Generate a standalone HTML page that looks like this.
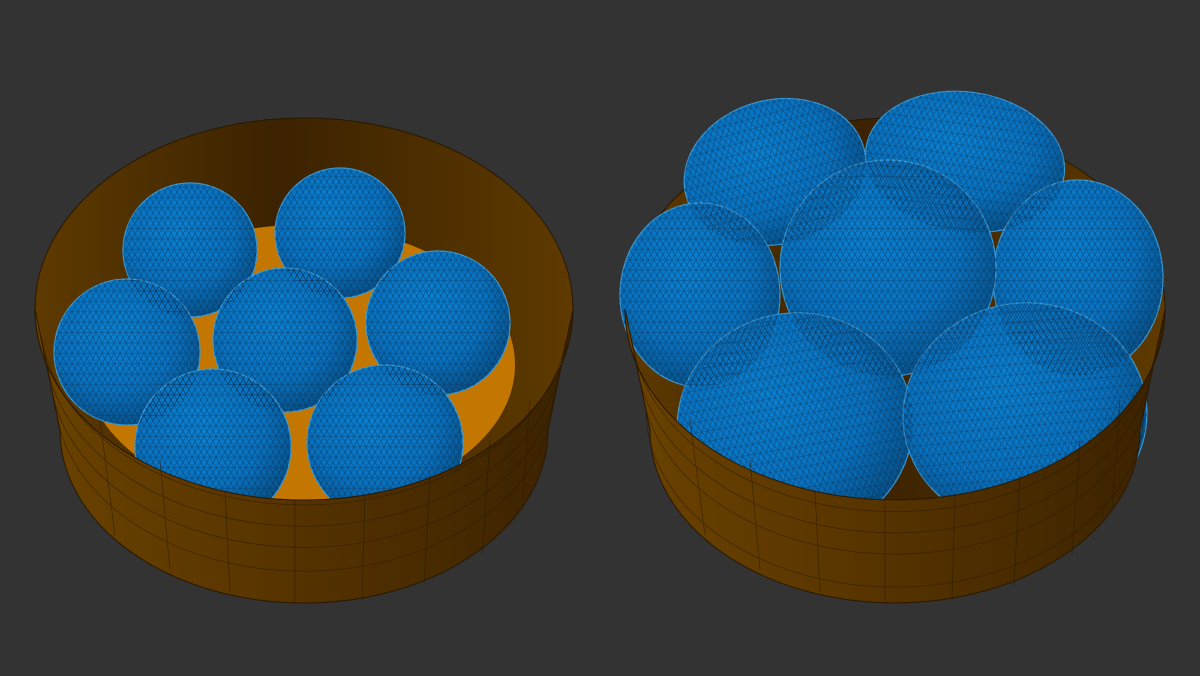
<!DOCTYPE html>
<html><head><meta charset="utf-8"><style>html,body{margin:0;padding:0;background:#333333;width:1200px;height:676px;overflow:hidden}</style></head>
<body>
<svg width="1200" height="676" viewBox="0 0 1200 676" xmlns="http://www.w3.org/2000/svg">
<defs>
<pattern id="mesh" width="12" height="20.78" patternUnits="userSpaceOnUse">
<path d="M0 0H12M0 10.39H12M0 20.78H12M0 0L12 20.78M12 0L0 20.78M6 0L12 10.39M6 0L0 10.39M12 10.39L6 20.78M0 10.39L6 20.78" stroke="#0b2540" stroke-width="0.6" fill="none" opacity="0.55"/>
</pattern>
<radialGradient id="sg" cx="0.42" cy="0.36" r="0.68">
<stop offset="0" stop-color="#0a80d0"/><stop offset="0.6" stop-color="#0872c0"/><stop offset="1" stop-color="#064e85"/>
</radialGradient>
<linearGradient id="wallIn" x1="0" y1="0" x2="1" y2="0">
<stop offset="0" stop-color="#5e3a00"/><stop offset="0.45" stop-color="#3b2200"/><stop offset="1" stop-color="#5e3a00"/>
</linearGradient>
<linearGradient id="wallOut" x1="0" y1="0" x2="1" y2="0">
<stop offset="0" stop-color="#6a4200"/><stop offset="0.4" stop-color="#5a3600"/><stop offset="0.7" stop-color="#4a2c00"/><stop offset="1" stop-color="#3a2200"/>
</linearGradient>
<clipPath id="c1"><ellipse cx="304" cy="309" rx="269" ry="191"/></clipPath>
</defs>

<!-- LEFT BOWL -->
<g>
<path d="M35 309 A269 191 0 0 0 573 309 L548 430 A244 173 0 0 1 60 430 Z" fill="url(#wallOut)"/>
<ellipse cx="304" cy="309" rx="269" ry="191" fill="url(#wallIn)" stroke="#2a1800" stroke-width="1"/>
<ellipse cx="300" cy="365" rx="215" ry="140" fill="#c47700" clip-path="url(#c1)"/>
<g fill="url(#sg)" stroke="#3a9bd8" stroke-width="1.2">
<circle cx="190" cy="250" r="67"/><circle cx="340" cy="233" r="65"/>
<circle cx="127" cy="352" r="73"/><circle cx="438" cy="323" r="72"/>
<circle cx="285" cy="340" r="72"/>
<circle cx="213" cy="447" r="78"/><circle cx="385" cy="443" r="78"/>
</g>
<g fill="url(#mesh)">
<circle cx="190" cy="250" r="67"/><circle cx="340" cy="233" r="65"/>
<circle cx="127" cy="352" r="73"/><circle cx="438" cy="323" r="72"/>
<circle cx="285" cy="340" r="72"/>
<circle cx="213" cy="447" r="78"/><circle cx="385" cy="443" r="78"/>
</g>
<path d="M35 309 A269 191 0 0 0 573 309 L548 430 A244 173 0 0 1 60 430 Z" fill="url(#wallOut)" stroke="#2a1800" stroke-width="1"/>
<g stroke="#2a1800" stroke-width="0.8" fill="none" opacity="0.6">
<path d="M42 340 A264 188 0 0 0 566 340"/><path d="M47 365 A259 184 0 0 0 561 365"/>
<path d="M52 390 A254 180 0 0 0 556 390"/><path d="M56 410 A249 177 0 0 0 552 410"/>
<path d="M100 420 L115 535M160 460 L170 570M225 490 L230 592M295 500 L295 603M365 495 L362 600M430 475 L424 585M490 440 L482 555M530 400 L522 510"/>
</g>
</g>

<!-- RIGHT BOWL -->
<g>
<path d="M625 309 A270 191 0 0 0 1165 309 L1140 430 A245 173 0 0 1 650 430 Z" fill="url(#wallOut)"/>
<ellipse cx="895" cy="309" rx="270" ry="191" fill="url(#wallIn)" stroke="#2a1800"/>
<g fill="url(#sg)" stroke="#3a9bd8" stroke-width="1.2">
<ellipse cx="775" cy="172" rx="92" ry="72" transform="rotate(-15 775 172)"/>
<ellipse cx="965" cy="162" rx="100" ry="70" transform="rotate(8 965 162)"/>
<ellipse cx="700" cy="295" rx="80" ry="92"/>
<ellipse cx="1078" cy="278" rx="85" ry="98"/>
<ellipse cx="888" cy="268" rx="108" ry="108"/>
<ellipse cx="795" cy="425" rx="118" ry="112" transform="rotate(-10 795 425)"/>
<ellipse cx="1025" cy="415" rx="122" ry="112" transform="rotate(-5 1025 415)"/>
</g>
<g fill="url(#mesh)">
<ellipse cx="775" cy="172" rx="92" ry="72" transform="rotate(-15 775 172)"/>
<ellipse cx="965" cy="162" rx="100" ry="70" transform="rotate(8 965 162)"/>
<ellipse cx="700" cy="295" rx="80" ry="92"/>
<ellipse cx="1078" cy="278" rx="85" ry="98"/>
<ellipse cx="888" cy="268" rx="108" ry="108"/>
<ellipse cx="795" cy="425" rx="118" ry="112" transform="rotate(-10 795 425)"/>
<ellipse cx="1025" cy="415" rx="122" ry="112" transform="rotate(-5 1025 415)"/>
</g>
<path d="M625 309 A270 191 0 0 0 1165 309 L1140 430 A245 173 0 0 1 650 430 Z" fill="url(#wallOut)" stroke="#2a1800"/>
<g stroke="#2a1800" stroke-width="0.8" fill="none" opacity="0.6">
<path d="M632 340 A264 188 0 0 0 1158 340"/><path d="M637 365 A259 184 0 0 0 1153 365"/>
<path d="M642 390 A254 180 0 0 0 1148 390"/><path d="M646 410 A249 177 0 0 0 1144 410"/>
<path d="M690 420 L705 535M750 460 L760 570M815 490 L820 592M885 500 L885 603M955 495 L952 600M1020 475 L1014 585M1080 440 L1072 555M1120 400 L1112 510"/>
</g>
</g>
</svg>
</body></html>
